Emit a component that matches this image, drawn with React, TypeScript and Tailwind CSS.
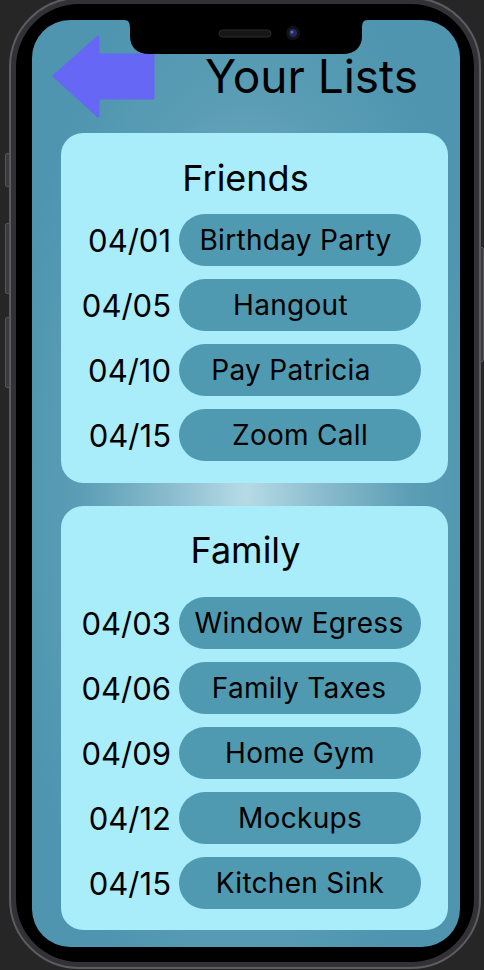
import React from "react";

type Item = { date: string; label: string; shift?: string };

const friends: Item[] = [
  { date: "04/01", label: "Birthday Party", shift: "pr-[9px]" },
  { date: "04/05", label: "Hangout", shift: "pr-[19px]" },
  { date: "04/10", label: "Pay Patricia", shift: "pr-[18px]" },
  { date: "04/15", label: "Zoom Call" },
];

const family: Item[] = [
  { date: "04/03", label: "Window Egress", shift: "pr-[2px]" },
  { date: "04/06", label: "Family Taxes", shift: "pr-[2px]" },
  { date: "04/09", label: "Home Gym" },
  { date: "04/12", label: "Mockups" },
  { date: "04/15", label: "Kitchen Sink" },
];

function Row({ item }: { item: Item }) {
  return (
    <div className="flex items-center h-[52px]">
      <div className="w-[110px] text-right text-[31px] leading-none text-black">{item.date}</div>
      <div
        className={`ml-[8px] w-[242px] h-[52px] rounded-full bg-[#4f9ab0] flex items-center justify-center text-[28px] tracking-[0.3px] leading-none text-black ${item.shift ?? ""}`}
      >
        {item.label}
      </div>
    </div>
  );
}

function Card({ title, items, headPad, gap }: { title: string; items: Item[]; headPad: string; gap: string }) {
  return (
    <div className="h-full bg-[#a9ecfa] rounded-[22px] flex flex-col">
      <div className={`${headPad} pr-[18px] text-center text-[36px] leading-none text-black h-[36px] box-content`}>{title}</div>
      <div className={`flex flex-col gap-[13px] ${gap}`}>
        {items.map((it) => (
          <Row key={it.date + it.label} item={it} />
        ))}
      </div>
    </div>
  );
}

export default function App() {
  return (
    <div
      className="relative w-[484px] h-[970px] bg-[#262626] overflow-hidden"
      style={{ fontFamily: "Inter, 'Noto Sans', sans-serif" }}
    >
      {/* side buttons */}
      <div className="absolute left-[5px] top-[153px] w-[5px] h-[34px] rounded-l-[2px] bg-[#3b3b3f] border border-[#55555a]" />
      <div className="absolute left-[5px] top-[223px] w-[5px] h-[71px] rounded-l-[2px] bg-[#3b3b3f] border border-[#55555a]" />
      <div className="absolute left-[5px] top-[317px] w-[5px] h-[71px] rounded-l-[2px] bg-[#3b3b3f] border border-[#55555a]" />
      <div className="absolute left-[480px] top-[247px] w-[4px] h-[115px] rounded-r-[2px] bg-[#3b3b3f] border border-[#55555a]" />

      {/* phone */}
      <div className="ml-[9px] mt-[-3px] w-[472px] h-[972px] rounded-[70px] bg-[#323236] border-[2px] border-[#5b5b60] p-[5px]">
        <div className="w-full h-full rounded-[63px] bg-black pl-[16px] pt-[16px]">
          <div className="relative w-[428px] h-[927px] rounded-[38px] overflow-hidden bg-[radial-gradient(ellipse_240px_560px_at_50%_51%,#b6dbe6_0%,#86b9cb_35%,#5a9db5_70%,#4f95af_100%)] flex flex-col">
            {/* notch */}
            <svg className="absolute left-[92px] top-0" width="244" height="35" viewBox="0 0 244 35">
              <path
                d="M0 0 H244 C239 0 238 3 238 9 V16 C238 27 231 34 219 34 H25 C13 34 6 27 6 16 V9 C6 3 5 0 0 0 Z"
                fill="#000"
              />
              <rect x="95" y="10" width="52" height="7" rx="3.5" fill="#161616" stroke="#2c2c2e" strokeWidth="1" />
              <circle cx="169" cy="13" r="7" fill="#121214" />
              <circle cx="169" cy="13" r="4" fill="#23285a" />
              <circle cx="168" cy="12" r="1.5" fill="#5a6ad0" />
            </svg>

            {/* header */}
            <div className="h-[113px] flex items-start justify-between pl-[20px] pr-[42px] shrink-0">
              <svg className="mt-[15px]" width="103" height="83" viewBox="0 0 103 83">
                <polygon
                  points="2,41 46,2 46,20 101,20 101,63 46,63 46,81"
                  fill="#6767f6"
                  stroke="#6767f6"
                  strokeWidth="3"
                  strokeLinejoin="round"
                />
              </svg>
              <div className="mt-[33px] text-[46px] leading-none text-black">Your Lists</div>
            </div>

            {/* cards */}
            <div className="flex flex-col gap-[23px] pl-[29px] pr-[12px]">
              <div className="h-[350px]">
                <Card title="Friends" items={friends} headPad="pt-[27px]" gap="mt-[18px]" />
              </div>
              <div className="h-[424px]">
                <Card title="Family" items={family} headPad="pt-[26px]" gap="mt-[29px]" />
              </div>
            </div>
          </div>
        </div>
      </div>
    </div>
  );
}
